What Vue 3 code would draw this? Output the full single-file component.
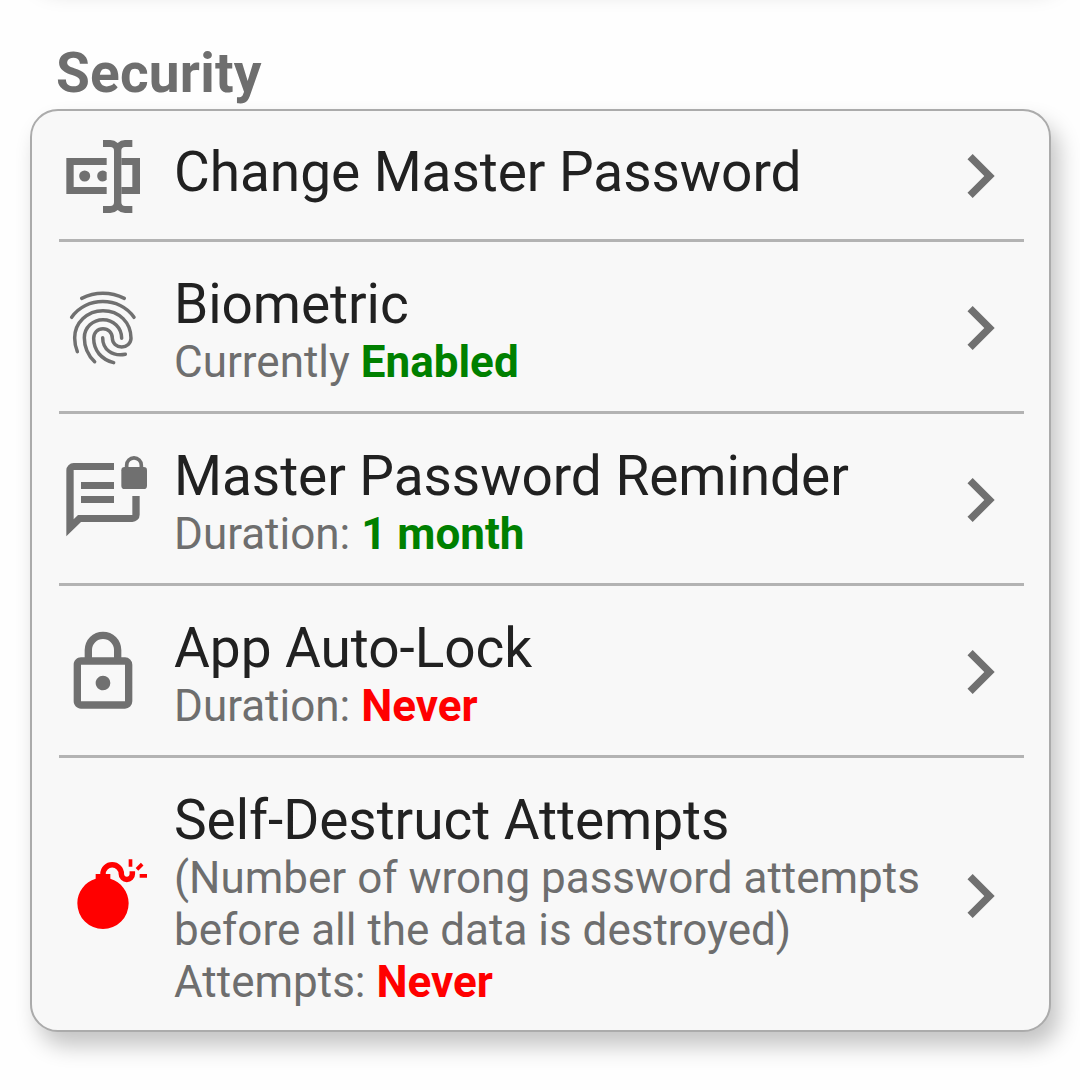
<script setup>
const rows = [
  { icon: 'rename', title: 'Change Master Password', lines: [], height: 128, shift: 2 },
  { icon: 'finger', title: 'Biometric', lines: [], label: 'Currently', value: 'Enabled', tone: 'good', height: 169, shift: 3 },
  { icon: 'reminder', title: 'Master Password Reminder', lines: [], label: 'Duration:', value: '1 month', tone: 'good', height: 169, shift: 3 },
  { icon: 'lock', title: 'App Auto-Lock', lines: [], label: 'Duration:', value: 'Never', tone: 'bad', height: 169, shift: 3 },
  {
    icon: 'bomb',
    title: 'Self-Destruct Attempts',
    lines: ['(Number of wrong password attempts', 'before all the data is destroyed)'],
    label: 'Attempts:',
    value: 'Never',
    tone: 'bad',
    height: 272,
    shift: 4
  }
]
</script>

<template>
  <main class="page">
    <div class="previous"></div>
    <h2 class="heading">Security</h2>
    <section class="card">
      <div v-for="row in rows" :key="row.title" class="row" :style="{ height: row.height + 'px', '--shift': row.shift + 'px' }">
        <svg v-if="row.icon === 'rename'" class="icon" viewBox="27 21 264 264">
          <path d="M49 99H170V120H71V186H170V207H49ZM214 99H270V207H214V186H247V120H214Z" />
          <circle cx="104" cy="153" r="16.5" />
          <path d="M170 141.7A16.5 16.5 0 1 0 170 164.3Z" />
          <path d="M159 45H181Q194 45 203 54Q212 45 225 45H247V66H225Q214 66 214 77V232Q214 243 225 243H247V264H225Q212 264 203 255Q194 264 181 264H159V243H181Q192 243 192 232V77Q192 66 181 66H159Z" />
        </svg>
        <svg v-else-if="row.icon === 'finger'" class="icon stroked" viewBox="27 12 264 264">
          <path d="M95 55C135 35 182 35 223 55" />
          <path d="M65 112C108 49 209 49 252 112" />
          <path d="M82 215C76 200 74 190 74 174C74 128 112 92 159 92C208 92 243 128 243 175A28 26 0 0 1 187 175C187 157 174 146 159 146C143 146 131 158 131 175C131 212 155 239 191 248" />
          <path d="M134 245C110 222 103 199 103 173C103 142 129 119 159 119C190 119 215 143 215 175" />
          <path d="M158 173C158 209 187 230 226 223" />
        </svg>
        <svg v-else-if="row.icon === 'reminder'" class="icon" viewBox="27 33 264 264">
          <path d="M192 54H71A22 22 0 0 0 49 76V274L93 231H247A22 22 0 0 0 269 209V153H247V210H84L71 223V75H192Z" />
          <path d="M93 111H192V132H93ZM93 153H192V174H93Z" />
          <rect x="214" y="66" width="77" height="66" rx="10" />
          <path class="shackle" d="M230 68V60.5A22 22 0 0 1 274 60.5V68" />
        </svg>
        <svg v-else-if="row.icon === 'lock'" class="icon" viewBox="0 0 24 24">
          <path d="M12,17C10.89,17 10,16.1 10,15C10,13.89 10.89,13 12,13A2,2 0 0,1 14,15A2,2 0 0,1 12,17M18,20V10H6V20H18M18,8A2,2 0 0,1 20,10V20A2,2 0 0,1 18,22H6C4.89,22 4,21.1 4,20V10C4,8.89 4.89,8 6,8H7V6A5,5 0 0,1 12,1A5,5 0 0,1 17,6V8H18M12,3A3,3 0 0,0 9,6V8H15V6A3,3 0 0,0 12,3Z" />
        </svg>
        <svg v-else class="icon danger" viewBox="0 0 24 24">
          <path d="M11.25,6A3.25,3.25 0 0,1 14.5,2.75A3.25,3.25 0 0,1 17.75,6C17.75,6.42 18.08,6.75 18.5,6.75C18.92,6.75 19.25,6.42 19.25,6V5.25H20.75V6A2.25,2.25 0 0,1 18.5,8.25A2.25,2.25 0 0,1 16.25,6A1.75,1.75 0 0,0 14.5,4.25A1.75,1.75 0 0,0 12.75,6H14V7.29C16.89,8.15 19,10.83 19,14A7,7 0 0,1 12,21A7,7 0 0,1 5,14C5,10.83 7.11,8.15 10,7.29V6H11.25M22,6H24V7H22V6M19,4V2H20V4H19M20.91,4.38L22.33,2.96L23.04,3.67L21.62,5.09L20.91,4.38Z" />
        </svg>
        <div class="text">
          <div class="title">{{ row.title }}</div>
          <div v-for="line in row.lines" :key="line" class="sub">{{ line }}</div>
          <div v-if="row.label" class="sub">{{ row.label }} <b :class="row.tone">{{ row.value }}</b></div>
        </div>
        <svg class="icon" viewBox="0 0 24 24">
          <path d="M8.59,16.58L13.17,12L8.59,7.41L10,6L16,12L10,18L8.59,16.58Z" />
        </svg>
      </div>
    </section>
  </main>
</template>

<style>
body {
  background: #fefefe;
}
</style>

<style scoped>
.page {
  box-sizing: border-box;
  width: 1080px;
  height: 1090px;
  overflow: hidden;
  font-family: Roboto, "Liberation Sans", sans-serif;
  color: #6e6e6e;
}
.previous {
  height: 40px;
  margin: -66px 30px 66px;
  border-radius: 28px;
  box-shadow: 8px 14px 24px rgba(0, 0, 0, 0.22);
}
.heading {
  margin: 0 0 0 56px;
  padding-top: 1px;
  height: 68px;
  font-size: 55px;
  line-height: 65px;
  font-weight: 700;
  letter-spacing: 0.2px;
}
.card {
  box-sizing: border-box;
  width: 1021px;
  height: 923px;
  margin-left: 30px;
  padding: 0 25px 0 27px;
  border: 2px solid #ababab;
  border-radius: 28px;
  background: #f8f8f8;
  box-shadow: 8px 14px 22px rgba(0, 0, 0, 0.23);
}
.row {
  display: flex;
  align-items: center;
}
.row + .row {
  border-top: 3px solid #b3b3b3;
}
.icon {
  flex: none;
  width: 88px;
  height: 88px;
  margin-top: var(--shift);
  fill: #707070;
}
.danger {
  fill: #f00;
}
.stroked {
  fill: none;
  stroke: #707070;
  stroke-width: 10.5;
  stroke-linecap: round;
}
.shackle {
  fill: none;
  stroke: #707070;
  stroke-width: 11;
}
.text {
  flex: 1;
  align-self: flex-start;
  margin: 30px 0 0 27px;
  white-space: nowrap;
}
.row:first-child .text {
  margin-top: 29px;
}
.title {
  height: 64px;
  font-size: 55px;
  line-height: 65px;
  letter-spacing: -0.06px;
  color: #212121;
}
.sub {
  height: 52px;
  font-size: 44px;
  line-height: 52px;
}
.good {
  color: #008000;
}
.bad {
  color: #f00;
}
</style>
